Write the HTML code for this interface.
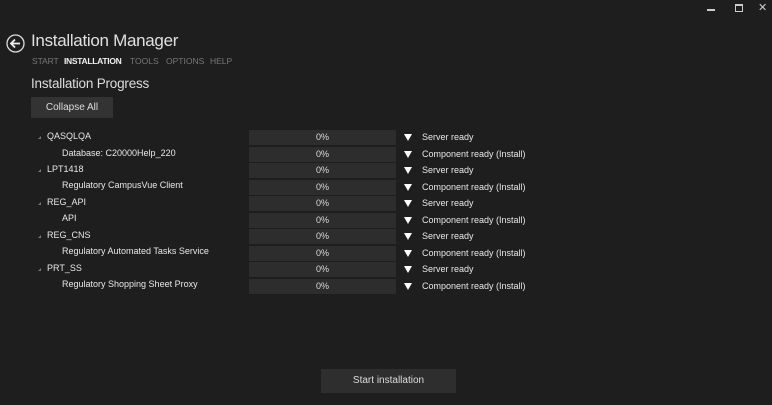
<!DOCTYPE html>
<html><head><meta charset="utf-8"><style>
body{margin:0;width:772px;height:405px;background:#1e1e1e;overflow:hidden;font-family:"Liberation Sans",sans-serif;color:#e6e6e6;position:relative}
.a{position:absolute;white-space:nowrap}
.bar{position:absolute;left:249px;width:147px;height:15px;background:#2d2d2d;font-size:9px;line-height:15px;text-align:center;color:#ddd}
.lbl{position:absolute;font-size:9px;line-height:15px;color:#e8e8e8;white-space:nowrap}
.tri{position:absolute;left:404px;width:0;height:0;border-left:4px solid transparent;border-right:4px solid transparent;border-top:7px solid #fff}
.st{position:absolute;left:422px;font-size:9px;line-height:15px;color:#e8e8e8;white-space:nowrap}
.exp{position:absolute;left:38px;width:0;height:0;border-left:3px solid transparent;border-bottom:3px solid #777}
</style></head><body>
<div class="a" style="left:707px;top:9px;width:8px;height:2px;background:#ccc"></div>
<div class="a" style="left:735px;top:4px;width:6px;height:5px;border:1px solid #ccc;border-top-width:2px"></div>
<div class="a" style="left:758px;top:1px;font-size:11px;color:#ccc">✕</div>
<svg class="a" style="left:6px;top:34px" width="19" height="19" viewBox="0 0 19 19"><circle cx="9.5" cy="9.5" r="8.5" fill="none" stroke="#ddd" stroke-width="1.3"/><path d="M5 9.5H14M9 5.5L5 9.5L9 13.5" fill="none" stroke="#eee" stroke-width="1.8"/></svg>
<div class="a" style="left:31px;top:31px;font-size:17px;color:#e0e0e0;letter-spacing:-0.3px">Installation Manager</div>
<div class="a" style="left:32px;top:56px;font-size:8.5px;color:#777;letter-spacing:-0.1px">START</div>
<div class="a" style="left:64px;top:56px;font-size:8.5px;color:#f0f0f0;font-weight:bold;letter-spacing:-0.3px">INSTALLATION</div>
<div class="a" style="left:130px;top:56px;font-size:8.5px;color:#777">TOOLS</div>
<div class="a" style="left:166px;top:56px;font-size:8.5px;color:#777">OPTIONS</div>
<div class="a" style="left:210px;top:56px;font-size:8.5px;color:#777">HELP</div>
<div class="a" style="left:31px;top:76px;font-size:13.5px;color:#ddd;letter-spacing:-0.2px">Installation Progress</div>
<div class="a" style="left:31px;top:97px;width:82px;height:21px;background:#333;font-size:10px;line-height:21px;text-align:center;color:#ddd">Collapse All</div>

<div class="exp" style="top:136px"></div><div class="lbl" style="left:47px;top:129px">QASQLQA</div>
<div class="lbl" style="left:62px;top:146px">Database: C20000Help_220</div>
<div class="exp" style="top:169px"></div><div class="lbl" style="left:47px;top:162px">LPT1418</div>
<div class="lbl" style="left:62px;top:178px">Regulatory CampusVue Client</div>
<div class="exp" style="top:202px"></div><div class="lbl" style="left:47px;top:195px">REG_API</div>
<div class="lbl" style="left:62px;top:211px">API</div>
<div class="exp" style="top:235px"></div><div class="lbl" style="left:47px;top:228px">REG_CNS</div>
<div class="lbl" style="left:62px;top:244px">Regulatory Automated Tasks Service</div>
<div class="exp" style="top:268px"></div><div class="lbl" style="left:47px;top:261px">PRT_SS</div>
<div class="lbl" style="left:62px;top:277px">Regulatory Shopping Sheet Proxy</div>

<div class="bar" style="top:130px">0%</div><div class="tri" style="top:134px"></div><div class="st" style="top:130px">Server ready</div>
<div class="bar" style="top:146.5px">0%</div><div class="tri" style="top:150.5px"></div><div class="st" style="top:146.5px">Component ready (Install)</div>
<div class="bar" style="top:163px">0%</div><div class="tri" style="top:167px"></div><div class="st" style="top:163px">Server ready</div>
<div class="bar" style="top:179.5px">0%</div><div class="tri" style="top:183.5px"></div><div class="st" style="top:179.5px">Component ready (Install)</div>
<div class="bar" style="top:196px">0%</div><div class="tri" style="top:200px"></div><div class="st" style="top:196px">Server ready</div>
<div class="bar" style="top:212.5px">0%</div><div class="tri" style="top:216.5px"></div><div class="st" style="top:212.5px">Component ready (Install)</div>
<div class="bar" style="top:229px">0%</div><div class="tri" style="top:233px"></div><div class="st" style="top:229px">Server ready</div>
<div class="bar" style="top:245.5px">0%</div><div class="tri" style="top:249.5px"></div><div class="st" style="top:245.5px">Component ready (Install)</div>
<div class="bar" style="top:262px">0%</div><div class="tri" style="top:266px"></div><div class="st" style="top:262px">Server ready</div>
<div class="bar" style="top:278.5px">0%</div><div class="tri" style="top:282.5px"></div><div class="st" style="top:278.5px">Component ready (Install)</div>

<div class="a" style="left:321px;top:369px;width:135px;height:24px;background:#2e2e2e;font-size:10px;line-height:24px;text-align:center;color:#ddd">Start installation</div>
</body></html>
